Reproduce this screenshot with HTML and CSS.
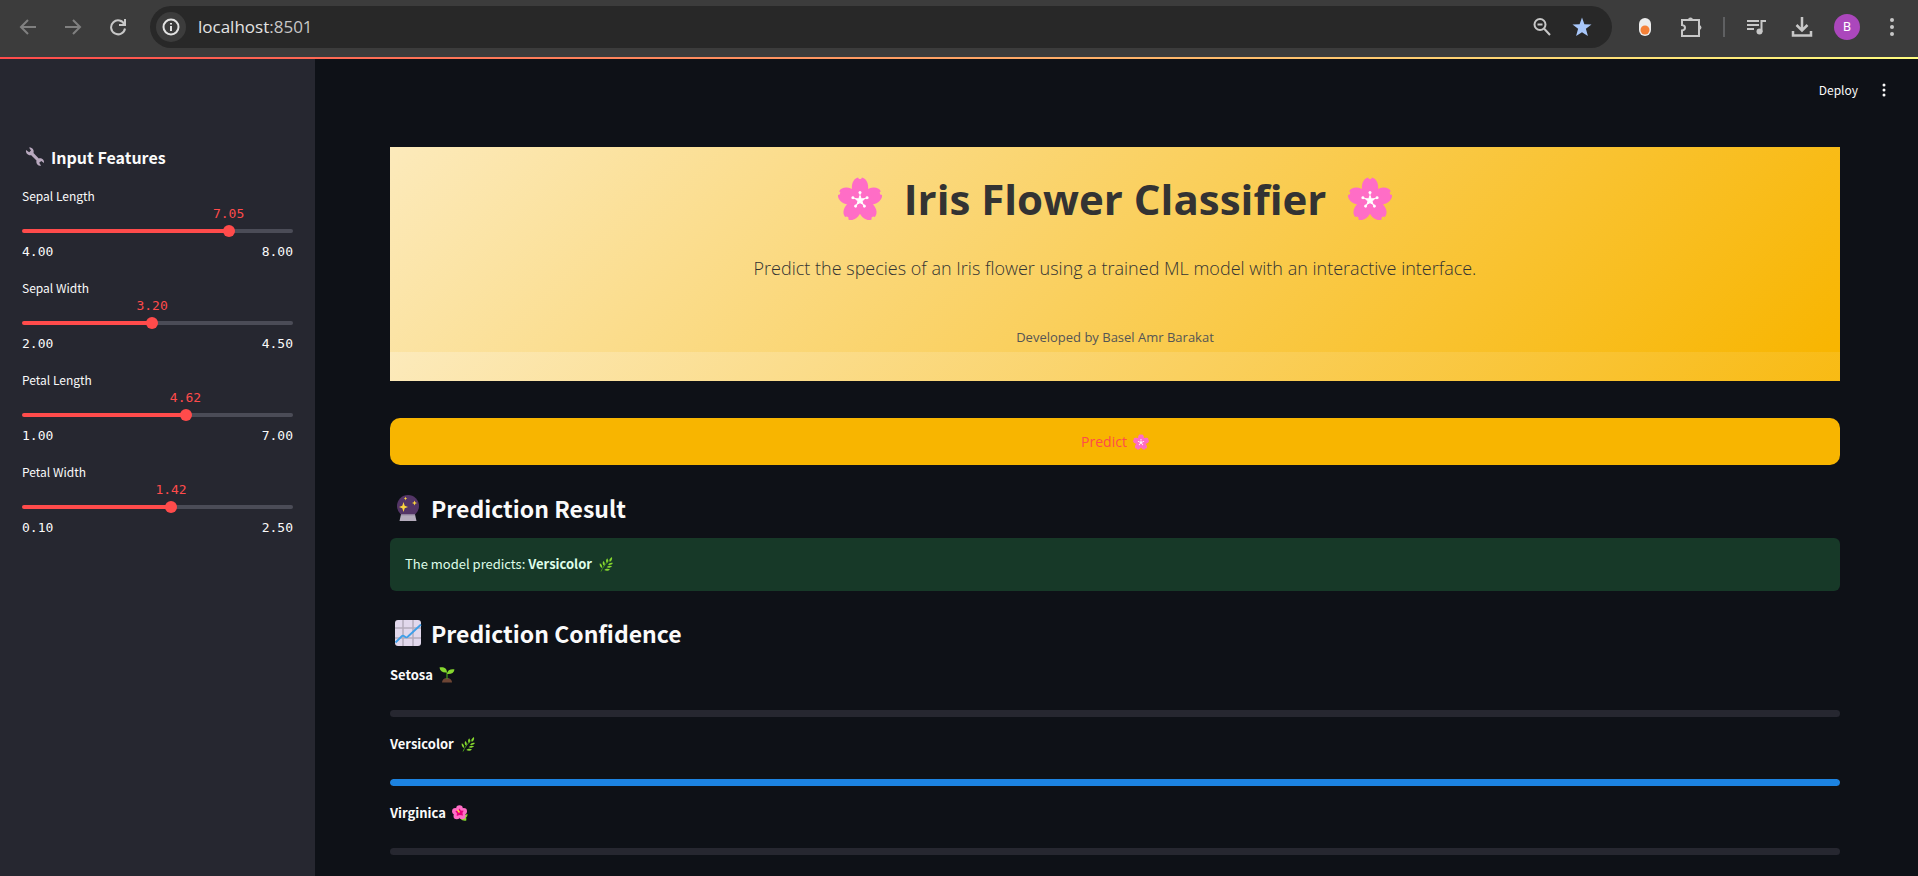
FILE: index.html
```html
<!DOCTYPE html>
<html lang="en">
<head>
<meta charset="utf-8">
<title>Iris Flower Classifier</title>
<link rel="stylesheet" href="styles.css">
</head>
<body>
<svg class="defs" aria-hidden="true">
  <defs>
    <symbol id="blossom" viewBox="0 0 44 44">
      <g fill="#ff6dc6">
        <path id="petal" d="M22 25C15 20 12.500 12 14.500 6c1-3 3-5 5.500-5.500l1 1.500h2l1-1.500c2.500.5 4.500 2.500 5.500 5.500 2 6-.5 14-7.500 19z"/>
        <use href="#petal" transform="rotate(72 22 23)"/>
        <use href="#petal" transform="rotate(144 22 23)"/>
        <use href="#petal" transform="rotate(216 22 23)"/>
        <use href="#petal" transform="rotate(288 22 23)"/>
      </g>
      <g fill="#fff" stroke="#fff">
        <path d="M22 19l1.300 2.700 3 .4-2.200 2.100.6 3-2.700-1.500-2.700 1.500.6-3-2.200-2.100 3-.4z"/>
        <g id="stamen"><path d="M22 22v-6.500"/><circle cx="22" cy="15.500" r="1.500" stroke="none"/></g>
        <use href="#stamen" transform="rotate(72 22 23)"/>
        <use href="#stamen" transform="rotate(144 22 23)"/>
        <use href="#stamen" transform="rotate(216 22 23)"/>
        <use href="#stamen" transform="rotate(288 22 23)"/>
      </g>
    </symbol>
    <symbol id="herb" viewBox="0 0 16 16">
      <path d="M3 15.500C4.500 11.500 8 7 12 3.500" fill="none" stroke="#44911b" stroke-width="1"/>
      <g fill="#86d72f">
        <path d="M14 1c.5 2-.3 4-2.300 5-.7-2 .2-4 2.300-5z"/>
        <path d="M9.200 2.200c1.300 1.600 1 3.500-.2 4.800-1.400-1.200-1.200-3.500.2-4.800z"/>
        <path d="M5.300 5c1.600 1.200 1.900 3.200 1 4.700C4.600 9 4.200 6.700 5.300 5z"/>
        <path d="M1.800 7.300c1.900.8 2.700 2.800 2.300 4.600-1.800-.5-2.900-2.600-2.300-4.600z"/>
        <path d="M15 7c-1 1.700-3 2.200-4.900 1.700C11 7 13 6.200 15 7z"/>
        <path d="M14 10.300c-1.200 1.500-3.600 1.900-5.300 1 1.200-1.500 3.500-2 5.300-1z"/>
        <path d="M12 13.500c-1.500 1.600-4 1.700-5.700.5 1.400-1.500 4-1.800 5.700-.5z"/>
      </g>
    </symbol>
  </defs>
</svg>

<header class="browser">
  <nav class="browser-nav">
    <button class="icon-btn dim" aria-label="Back"><svg width="18" height="18" viewBox="0 0 18 18"><path d="M17 9H2.500M9 2L2 9l7 7"/></svg></button>
    <button class="icon-btn dim" aria-label="Forward"><svg width="18" height="18" viewBox="0 0 18 18"><path d="M1 9h14.500M9 2l7 7-7 7"/></svg></button>
    <button class="icon-btn" aria-label="Reload"><svg width="18" height="18" viewBox="0 0 18 18"><path d="M15.500 6.500A7 7 0 1 0 16 10.500M16 1v6h-6"/></svg></button>
  </nav>
  <div class="omnibox">
    <button class="site-info" aria-label="Site information"><svg width="18" height="18" viewBox="0 0 18 18"><circle cx="9" cy="9" r="7.500"/><path d="M9 8v5M9 5v1.500"/></svg></button>
    <div class="url">localhost<span class="port">:8501</span></div>
    <button class="icon-btn" aria-label="Zoom"><svg width="20" height="20" viewBox="0 0 20 20"><circle cx="8" cy="7.500" r="5.500"/><path d="M5.500 7.500h5M12 11.500l6 6.500"/></svg></button>
    <button class="icon-btn" aria-label="Bookmark"><svg width="20" height="20" viewBox="0 0 20 20"><path class="star" d="M10 .5l2.400 6.700 7.100.2-5.600 4.400 2 7.200L10 15.200l-5.900 3.800 2-7.200L.5 7.400l7.100-.2z"/></svg></button>
  </div>
  <div class="browser-tools">
    <button class="icon-btn" aria-label="Extension"><svg width="12" height="20" viewBox="0 0 12 20"><rect class="pill" y="1" width="12" height="18" rx="6"/><circle class="pill-dot" cx="6" cy="13" r="4.500"/></svg></button>
    <button class="icon-btn" aria-label="Extensions"><svg width="22" height="22" viewBox="0 0 22 22"><path d="M2 4h17v16H2v-5.500c4-.5 4-5 0-5.500z"/><path class="solid" d="M8 4a2.500 2.500 0 0 1 5 0zM19 9a2.500 2.500 0 0 1 0 5z"/></svg></button>
    <span class="divider"></span>
    <button class="icon-btn" aria-label="Media"><svg width="20" height="18" viewBox="0 0 20 18"><path d="M1 3h12M1 7h12M1 11h7M15.500 14V3H20"/><circle class="solid" cx="13.500" cy="13.500" r="3"/></svg></button>
    <button class="icon-btn" aria-label="Downloads"><svg width="22" height="22" viewBox="0 0 22 22"><path stroke-width="2.500" d="M11 1v13M5.500 9l5.500 5.500L16.500 9M2 15v4.500h18V15"/></svg></button>
    <button class="avatar" aria-label="Profile">B</button>
    <button class="icon-btn" aria-label="Browser menu"><svg width="4" height="18" viewBox="0 0 4 18"><g class="solid"><circle cx="2" cy="2" r="2"/><circle cx="2" cy="9" r="2"/><circle cx="2" cy="16" r="2"/></g></svg></button>
  </div>
</header>
<div class="decoration"></div>

<div class="app">
  <aside class="sidebar">
    <h2 class="sidebar-title">
      <svg width="20" height="20" viewBox="0 0 20 20"><path fill="#b9a9bf" d="M1 3l3.200 2.300L6 3.600 4 .5C7 0 9.500 2.500 8.500 6l5.300 5.400c3-.6 5.700 1.600 5.200 4.600l-2.700-2-2.100 1.800 1.900 3c-3.200.1-5.400-2.300-4.600-5.300L6.200 8.200C3 8.800.5 6.200 1 3z"/></svg>
      Input Features
    </h2>
    <div class="field">
      <label for="sl">Sepal Length</label>
      <div class="slider" style="--pos: 76.25%"><output for="sl">7.05</output><input id="sl" type="range" min="4" max="8" step="0.01" value="7.05"></div>
      <div class="ends"><span>4.00</span><span>8.00</span></div>
    </div>
    <div class="field">
      <label for="sw">Sepal Width</label>
      <div class="slider" style="--pos: 48%"><output for="sw">3.20</output><input id="sw" type="range" min="2" max="4.5" step="0.01" value="3.2"></div>
      <div class="ends"><span>2.00</span><span>4.50</span></div>
    </div>
    <div class="field">
      <label for="pl">Petal Length</label>
      <div class="slider" style="--pos: 60.33%"><output for="pl">4.62</output><input id="pl" type="range" min="1" max="7" step="0.01" value="4.62"></div>
      <div class="ends"><span>1.00</span><span>7.00</span></div>
    </div>
    <div class="field">
      <label for="pw">Petal Width</label>
      <div class="slider" style="--pos: 55%"><output for="pw">1.42</output><input id="pw" type="range" min="0.1" max="2.5" step="0.01" value="1.42"></div>
      <div class="ends"><span>0.10</span><span>2.50</span></div>
    </div>
  </aside>

  <main class="main">
    <div class="toolbar">
      <button class="deploy">Deploy</button>
      <button class="kebab" aria-label="Main menu"><svg width="4" height="14" viewBox="0 0 4 14"><circle cx="2" cy="2" r="1.500"/><circle cx="2" cy="7" r="1.500"/><circle cx="2" cy="12" r="1.500"/></svg></button>
    </div>
    <div class="content">
      <section class="hero">
        <h1><svg class="hero-icon"><use href="#blossom"/></svg>Iris Flower Classifier<svg class="hero-icon"><use href="#blossom"/></svg></h1>
        <p class="lead">Predict the species of an Iris flower using a trained ML model with an interactive interface.</p>
        <p class="credit">Developed by Basel Amr Barakat</p>
      </section>

      <button class="predict">Predict <svg class="emoji"><use href="#blossom"/></svg></button>

      <h2 class="heading">
        <svg width="28" height="28" viewBox="0 0 28 28"><circle cx="14" cy="12" r="11" fill="#533566"/><path fill="#b4acbc" d="M7 20.500h14l1.500 6.500h-17z"/><path fill="#998ea4" d="M7 20.500h14v1H7z"/><path fill="#fcd53f" d="M9.500 8l1.200 3.800L14 13l-3.300 1.200L9.500 18l-1.200-3.800L5 13l3.300-1.200zM20.500 6.500l.7 1.800 1.800.7-1.800.7-.7 1.800-.7-1.800L18 9l1.800-.7zM11.500 2.500l.5 1.500 1.300.5L12 5l-.5 1.500L11 5l-1.300-.5L11 4z"/></svg>
        Prediction Result
      </h2>
      <div class="alert" role="status"><span>The model predicts: <strong>Versicolor</strong></span><svg class="emoji"><use href="#herb"/></svg></div>

      <h2 class="heading">
        <svg width="28" height="28" viewBox="0 0 28 28"><rect x="1" y="1" width="26" height="26" rx="3" fill="#e1d8ec"/><path d="M9 1v26M19 1v26M1 9h26M1 19h26" stroke="#b4acbc" stroke-width="1.500"/><path d="M1.500 23.500L8 17c1.200-1 2 0 3 .8 1.200 1 2 .8 3-.3L27 5.500" fill="none" stroke="#3f9fe8" stroke-width="1.800"/></svg>
        Prediction Confidence
      </h2>
      <div class="class-row">
        <div class="class-name" id="c1">Setosa
          <svg class="emoji" viewBox="0 0 16 16"><path fill="#6d4534" d="M3 15.500c0-2.500 2-4.500 5-4.500s5 2 5 4.500z"/><path d="M8 12V5" stroke="#44911b" stroke-width="1.300"/><path fill="#86d72f" d="M.5.500C5-.3 8 1.500 8 5.500 4 6 1 4.500.5.500zM15.500 2.500c-4-.6-7 .7-7.500 4.500 4 .5 7-1 7.500-4.500z"/></svg>
        </div>
        <div class="bar" role="progressbar" aria-labelledby="c1" aria-valuenow="0"><div class="fill" style="width: 0%"></div></div>
      </div>
      <div class="class-row">
        <div class="class-name" id="c2">Versicolor <svg class="emoji"><use href="#herb"/></svg></div>
        <div class="bar" role="progressbar" aria-labelledby="c2" aria-valuenow="100"><div class="fill" style="width: 100%"></div></div>
      </div>
      <div class="class-row">
        <div class="class-name" id="c3">Virginica
          <svg class="emoji" viewBox="0 0 16 16"><path fill="#86d72f" d="M9 11l6.500-2c0 2-.5 3-1.500 3.500.5 1 .3 2 .3 3-2 .5-4.500 0-6-2z"/><g fill="#ff6dc6"><circle cx="7.500" cy="3.500" r="3.300"/><circle cx="11.700" cy="6.300" r="3.300"/><circle cx="10.300" cy="11" r="3.300"/><circle cx="4.800" cy="11" r="3.300"/><circle cx="3.400" cy="6.300" r="3.300"/></g><path fill="#e6007e" d="M7.500 3.500l1.400 2 2.800.3-1.300 2.200.6 2.500-3.500-.5L4.700 11l.2-2.800L3.300 6l2.800-.5z"/><path d="M7.500 7.500L5.500 5" stroke="#fcd53f" stroke-width="1.500"/></svg>
        </div>
        <div class="bar" role="progressbar" aria-labelledby="c3" aria-valuenow="0"><div class="fill" style="width: 0%"></div></div>
      </div>
    </div>
  </main>
</div>
</body>
</html>
```
FILE: styles.css
```css
* { box-sizing: border-box; }

body {
  margin: 0;
  min-height: 100vh;
  display: flex;
  flex-direction: column;
  background: #0e1117;
  color: #fafafa;
  font-family: "Noto Sans CJK SC", "Open Sans", sans-serif;
  overflow: hidden;
}

button {
  border: 0;
  padding: 0;
  background: none;
  color: inherit;
  font: inherit;
}

h1, h2, p { margin: 0; }
svg { flex: none; }
.defs { position: absolute; width: 0; height: 0; }
.emoji { width: 16px; height: 16px; }

/* Browser bar */
.browser {
  flex: none;
  height: 57px;
  padding: 6px 12px 9px 14px;
  display: flex;
  align-items: center;
  background: #3c3c3c;
}

.browser-nav { display: flex; gap: 17px; width: 136px; flex: none; }

.icon-btn {
  width: 28px;
  height: 28px;
  display: grid;
  place-items: center;
  flex: none;
}

.icon-btn svg, .site-info svg {
  fill: none;
  stroke: #c7c7c7;
  stroke-width: 2;
}

.icon-btn.dim svg { stroke: #808080; }
.icon-btn .solid { fill: #c7c7c7; stroke: none; }
.icon-btn .star { fill: #a8c7fa; stroke: none; }
.icon-btn .pill { fill: #ececec; stroke: none; }
.icon-btn .pill-dot { fill: #f48037; stroke: none; }

.omnibox {
  flex: 1;
  height: 42px;
  padding: 0 16px 0 6px;
  display: flex;
  align-items: center;
  gap: 12px;
  border-radius: 21px;
  background: #282828;
}

.site-info {
  width: 30px;
  height: 30px;
  display: grid;
  place-items: center;
  border-radius: 50%;
  background: #3c3c3c;
}

.site-info svg { stroke: #e3e3e3; }

.url {
  flex: 1;
  font: 17px/24px "Open Sans", sans-serif;
  color: #e3e3e3;
}

.port { color: #c7c7c7; }

.browser-tools {
  flex: none;
  width: 294px;
  padding-left: 19px;
  display: flex;
  align-items: center;
  justify-content: space-between;
}

.divider { width: 2px; height: 20px; background: #5f6062; }

.avatar {
  width: 26px;
  height: 26px;
  border-radius: 50%;
  background: #ab47bc;
  color: #fff;
  font: 13px/26px Roboto, sans-serif;
}

.decoration {
  flex: none;
  height: 2px;
  background: linear-gradient(90deg, #ff4b4b, #fffd80);
}

.app { flex: 1; display: flex; }

/* Sidebar */
.sidebar {
  flex: none;
  width: 315px;
  padding: 84px 22px 0;
  background: #262730;
}

.sidebar-title {
  margin-bottom: 15px;
  padding-left: 3px;
  display: flex;
  align-items: center;
  gap: 6px;
  font-size: 16px;
  line-height: 28px;
  font-weight: 700;
}

.field { height: 92px; }

.field label {
  display: block;
  font-size: 12px;
  line-height: 20px;
}

.slider {
  position: relative;
  padding-top: 16px;
  height: 35px;
}

.slider::before {
  content: "";
  position: absolute;
  left: 0;
  right: 0;
  top: 23px;
  height: 4px;
  border-radius: 2px;
  background: linear-gradient(90deg, #ff4b4b var(--pos), #4b4c57 var(--pos));
}

.slider output {
  position: absolute;
  top: 0;
  left: var(--pos);
  transform: translateX(-50%);
  color: #ff4b4b;
  font: 13px/16px "DejaVu Sans Mono", monospace;
}

.slider input {
  position: relative;
  display: block;
  width: calc(100% + 12px);
  height: 18px;
  margin: 0 -6px;
  appearance: none;
  background: none;
}

.slider input::-webkit-slider-thumb {
  appearance: none;
  width: 12px;
  height: 12px;
  border-radius: 50%;
  background: #ff4b4b;
}

.ends {
  display: flex;
  justify-content: space-between;
  font: 13px/22px "DejaVu Sans Mono", monospace;
}

/* Main column */
.main { flex: 1; }

.toolbar {
  height: 88px;
  padding: 19px 32px 0 0;
  display: flex;
  justify-content: flex-end;
  align-items: flex-start;
  gap: 24px;
}

.deploy { font-size: 12px; line-height: 24px; }
.kebab { height: 24px; display: grid; place-items: center; }
.kebab svg { fill: #fafafa; }

.content { padding: 0 78px 0 75px; }

.hero {
  margin-bottom: 37px;
  padding: 20px 0 29px;
  background: linear-gradient(135deg, #fceabb, #f8b500) 0 0 / 100% 205px;
  color: #333;
  font-family: "Open Sans", sans-serif;
  text-align: center;
}

.hero h1 {
  display: flex;
  justify-content: center;
  align-items: center;
  gap: 22px;
  font-size: 42px;
  line-height: 64px;
  font-weight: 700;
}

.hero-icon { width: 44px; height: 44px; }

.lead {
  padding: 22px 0 40px;
  font-size: 18px;
  line-height: 30px;
  font-weight: 300;
}

.credit { color: #555; font-size: 13px; line-height: 29px; }

.predict {
  width: 100%;
  height: 47px;
  margin-bottom: 1px;
  display: flex;
  justify-content: center;
  align-items: center;
  gap: 6px;
  border-radius: 10px;
  background: #f8b500;
  color: #ff4b4b;
  font: 14px/20px "Open Sans", sans-serif;
}

.heading {
  padding: 24px 0 12px 4px;
  display: flex;
  align-items: center;
  gap: 9px;
  font-size: 23px;
  line-height: 36px;
  font-weight: 700;
}

.alert {
  min-height: 53px;
  padding: 0 15px 2px;
  display: flex;
  align-items: center;
  gap: 6px;
  border-radius: 6px;
  background: #173928;
  color: #dffde9;
  font-size: 13px;
  line-height: 24px;
}

.class-row { margin-bottom: 15px; }

.class-name {
  margin-bottom: 23px;
  display: flex;
  align-items: center;
  gap: 6px;
  font-size: 13px;
  line-height: 24px;
  font-weight: 700;
}

.bar {
  height: 7px;
  border-radius: 4px;
  background: #262730;
  overflow: hidden;
}

.fill { height: 100%; border-radius: 4px; background: #1c83e1; }
```
